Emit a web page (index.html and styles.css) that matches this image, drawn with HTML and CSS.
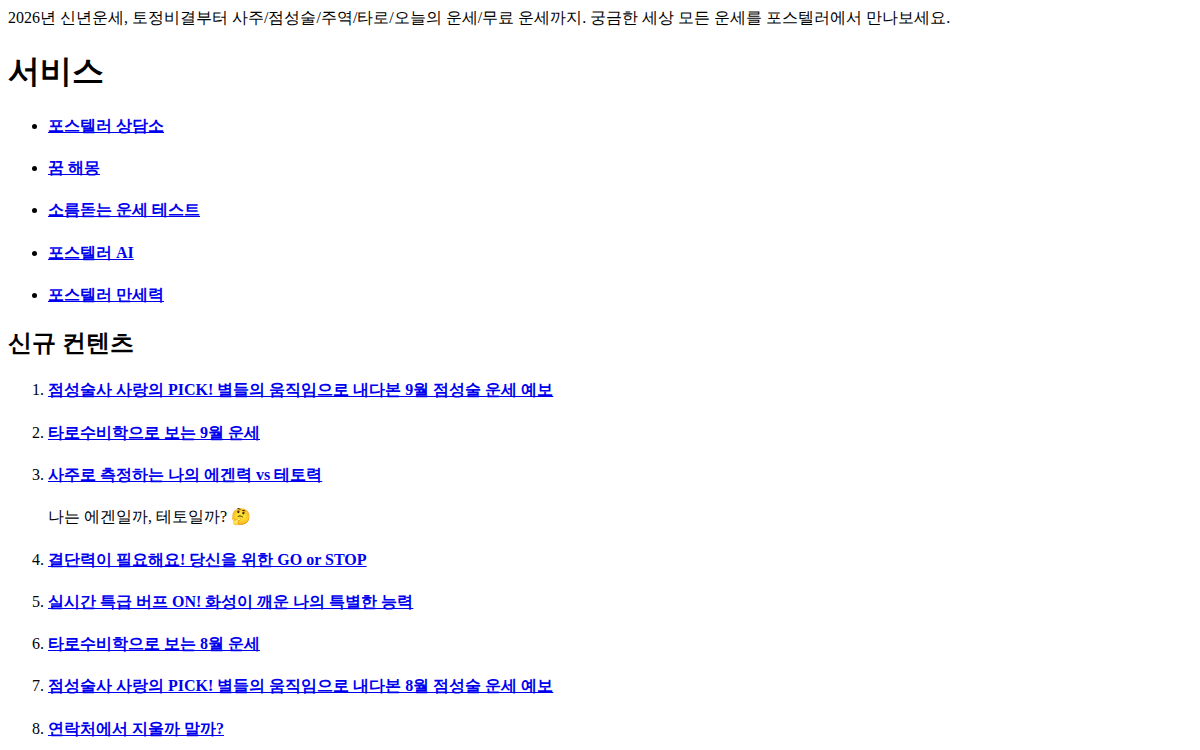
FILE: index.html
```html
<!DOCTYPE html>
<html lang="ko">
<head>
    <meta charset="UTF-8">
    <meta name="viewport" content="width=device-width, initial-scale=1.0">
    <title>포스텔러</title>
    <link rel="stylesheet" href="styles.css">
</head>
<body>
    <div class="intro">2026년 신년운세, 토정비결부터 사주/점성술/주역/타로/오늘의 운세/무료 운세까지. 궁금한 세상 모든 운세를 포스텔러에서 만나보세요.</div>
    <h1>서비스</h1>
    <ul class="services">
        <li><h4><a href="#">포스텔러 상담소</a></h4></li>
        <li><h4><a href="#">꿈 해몽</a></h4></li>
        <li><h4><a href="#">소름돋는 운세 테스트</a></h4></li>
        <li><h4><a href="#">포스텔러 AI</a></h4></li>
        <li><h4><a href="#">포스텔러 만세력</a></h4></li>
    </ul>
    <h2>신규 컨텐츠</h2>
    <ol class="contents">
        <li><h4><a href="#">점성술사 사랑의 PICK! 별들의 움직임으로 내다본 9월 점성술 운세 예보</a></h4></li>
        <li><h4><a href="#">타로수비학으로 보는 9월 운세</a></h4></li>
        <li>
            <h4><a href="#">사주로 측정하는 나의 에겐력 vs 테토력</a></h4>
            <p>나는 에겐일까, 테토일까? 🤔</p>
        </li>
        <li><h4><a href="#">결단력이 필요해요! 당신을 위한 GO or STOP</a></h4></li>
        <li><h4><a href="#">실시간 특급 버프 ON! 화성이 깨운 나의 특별한 능력</a></h4></li>
        <li><h4><a href="#">타로수비학으로 보는 8월 운세</a></h4></li>
        <li><h4><a href="#">점성술사 사랑의 PICK! 별들의 움직임으로 내다본 8월 점성술 운세 예보</a></h4></li>
        <li><h4><a href="#">연락처에서 지울까 말까?</a></h4></li>
    </ol>
</body>
</html>
```
FILE: styles.css
```css
body {
    font-family: "Liberation Serif", serif;
    background-color: white;
    color: black;
}
a {
    color: #0000ee;
    text-decoration: underline;
}
```
